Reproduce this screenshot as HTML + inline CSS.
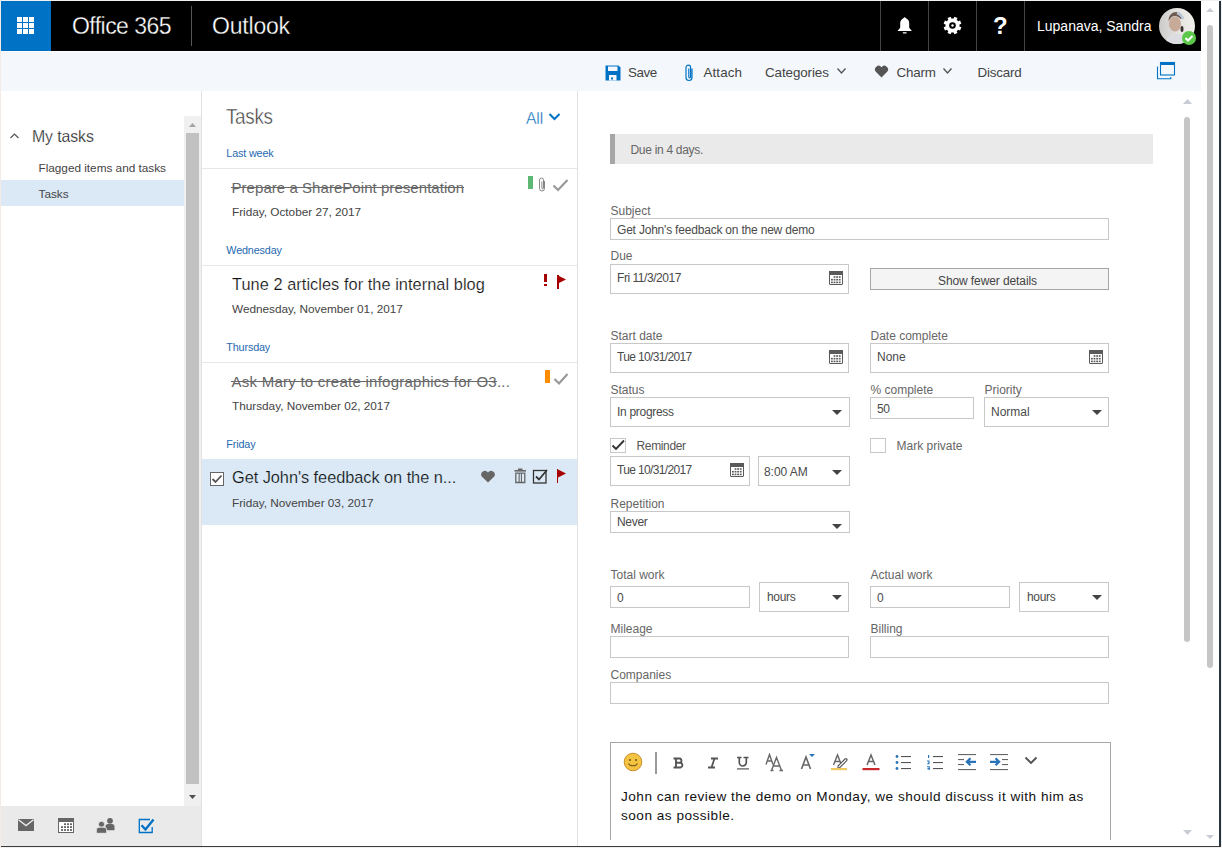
<!DOCTYPE html>
<html><head><meta charset="utf-8"><style>
html,body{margin:0;padding:0;width:1222px;height:848px;overflow:hidden;background:#fff}
body{position:relative;font-family:"Liberation Sans",sans-serif}
.t{position:absolute;white-space:nowrap;font-family:"Liberation Sans",sans-serif}
s{text-decoration:line-through}
</style></head><body>
<div style="position:absolute;left:0px;top:0px;width:1222px;height:848px;background:#fff;"></div>
<div style="position:absolute;left:1px;top:1px;width:1200px;height:50px;background:#000;"></div>
<div style="position:absolute;left:1px;top:1px;width:50px;height:50px;background:#0072c6;"></div>
<div style="position:absolute;left:17px;top:17px;width:5px;height:5px;background:#fff;"></div>
<div style="position:absolute;left:17px;top:23px;width:5px;height:5px;background:#fff;"></div>
<div style="position:absolute;left:17px;top:29px;width:5px;height:5px;background:#fff;"></div>
<div style="position:absolute;left:23px;top:17px;width:5px;height:5px;background:#fff;"></div>
<div style="position:absolute;left:23px;top:23px;width:5px;height:5px;background:#fff;"></div>
<div style="position:absolute;left:23px;top:29px;width:5px;height:5px;background:#fff;"></div>
<div style="position:absolute;left:29px;top:17px;width:5px;height:5px;background:#fff;"></div>
<div style="position:absolute;left:29px;top:23px;width:5px;height:5px;background:#fff;"></div>
<div style="position:absolute;left:29px;top:29px;width:5px;height:5px;background:#fff;"></div>
<div class="t" style="left:72px;top:15.13px;font-size:23px;line-height:23px;color:#fff;letter-spacing:-0.55px;font-weight:400;-webkit-text-stroke:0.3px #000;">Office 365</div>
<div style="position:absolute;left:191px;top:6px;width:1px;height:40px;background:#555;"></div>
<div class="t" style="left:212px;top:15.13px;font-size:23px;line-height:23px;color:#fff;letter-spacing:-0.2px;font-weight:400;-webkit-text-stroke:0.3px #000;">Outlook</div>
<div style="position:absolute;left:880px;top:1px;width:1px;height:50px;background:#444;"></div>
<div style="position:absolute;left:928px;top:1px;width:1px;height:50px;background:#444;"></div>
<div style="position:absolute;left:976px;top:1px;width:1px;height:50px;background:#444;"></div>
<div style="position:absolute;left:1024px;top:1px;width:1px;height:50px;background:#444;"></div>
<svg style="position:absolute;left:896px;top:16px;" width="18" height="20" viewBox="0 0 18 20"><path d="M8.6 1.2C7.8 1.2 7.4 2.3 6.3 3 4.9 3.9 4.2 5.3 4.2 7.5v4.3L1.5 15h14.4l-2.7-3.2V7.5c0-2.2-.7-3.6-2.1-4.5C10 2.3 9.5 1.2 8.6 1.2z" fill="#fff"/><path d="M6.6 16.2h4.2l-.6 1.3h-3z" fill="#fff"/></svg>
<svg style="position:absolute;left:943px;top:16px;" width="19" height="19" viewBox="0 0 19 19"><g transform="translate(9.5 9.5)" fill="#fff"><rect x="-1.7" y="-8.9" width="3.4" height="4" transform="rotate(22.5)"/><rect x="-1.7" y="-8.9" width="3.4" height="4" transform="rotate(67.5)"/><rect x="-1.7" y="-8.9" width="3.4" height="4" transform="rotate(112.5)"/><rect x="-1.7" y="-8.9" width="3.4" height="4" transform="rotate(157.5)"/><rect x="-1.7" y="-8.9" width="3.4" height="4" transform="rotate(202.5)"/><rect x="-1.7" y="-8.9" width="3.4" height="4" transform="rotate(247.5)"/><rect x="-1.7" y="-8.9" width="3.4" height="4" transform="rotate(292.5)"/><rect x="-1.7" y="-8.9" width="3.4" height="4" transform="rotate(337.5)"/><circle r="7"/></g><circle cx="9.5" cy="9.5" r="3.3" fill="#000"/><circle cx="9.5" cy="9.5" r="1.2" fill="#fff"/></svg>
<div class="t" style="left:993px;top:14.28px;font-size:24px;line-height:24px;color:#fff;letter-spacing:0px;font-weight:700;">?</div>
<div class="t" style="left:1037px;top:18.95px;font-size:14px;line-height:14px;color:#fff;letter-spacing:0px;font-weight:400;">Lupanava, Sandra</div>
<svg style="position:absolute;left:1158px;top:7px;" width="40" height="40" viewBox="0 0 40 40"><defs><clipPath id="ac"><circle cx="19" cy="19" r="18"/></clipPath><linearGradient id="ag" x1="0" y1="0" x2="1" y2="0"><stop offset="0" stop-color="#c9c9c9"/><stop offset="0.5" stop-color="#e6e3df"/><stop offset="1" stop-color="#f2f2ee"/></linearGradient></defs><g clip-path="url(#ac)"><rect width="40" height="40" fill="url(#ag)"/><path d="M6 40c1-9 6-13 13-13s12 4 13 13z" fill="#dcdde2"/><ellipse cx="17" cy="17" rx="6" ry="7.5" fill="#c7aa98"/><path d="M10.5 14c0-6 4-9 7.5-9s6.5 3 6.5 6l-2 1c-2-3-6-4-9-2z" fill="#6e5a4e"/><path d="M19 6c3 1 5 3 6 6" stroke="#b8c4d8" stroke-width="2.5" fill="none"/><ellipse cx="24" cy="22" rx="1.5" ry="3" fill="#3a3030"/></g><circle cx="31" cy="31" r="7" fill="#5cc84a"/><path d="M27.5 31l2.5 2.5 4.5-4.5" stroke="#fff" stroke-width="2" fill="none"/></svg>
<div style="position:absolute;left:1px;top:51px;width:1200px;height:1px;background:#fff;"></div>
<div style="position:absolute;left:1px;top:52px;width:1200px;height:39px;background:#f4f8fc;"></div>
<svg style="position:absolute;left:605px;top:65px;" width="16" height="16" viewBox="0 0 16 16"><path d="M0.5 0.5h13l2 2v13h-15z" fill="#0072c6"/><rect x="3" y="1.5" width="9.5" height="4.5" fill="#f4f8fc"/><rect x="4" y="10" width="7.5" height="5.5" fill="#f4f8fc"/><rect x="6" y="12.5" width="2" height="2" fill="#0072c6"/></svg>
<div class="t" style="left:628px;top:65.66px;font-size:13.4px;line-height:13.4px;color:#444;letter-spacing:-0.4px;font-weight:400;">Save</div>
<svg style="position:absolute;left:683px;top:63px;" width="12" height="19" viewBox="0 0 12 19"><path d="M8.5 5v9a3 3 0 0 1-6 0V4a2.3 2.3 0 0 1 4.6 0v9.5a.9.9 0 0 1-1.8 0V5" stroke="#0072c6" stroke-width="1.2" fill="none" transform="translate(0.5 0.5)"/></svg>
<div class="t" style="left:703.5px;top:65.66px;font-size:13.4px;line-height:13.4px;color:#444;letter-spacing:0.1px;font-weight:400;">Attach</div>
<div class="t" style="left:765px;top:65.66px;font-size:13.4px;line-height:13.4px;color:#444;letter-spacing:-0.1px;font-weight:400;">Categories</div>
<svg style="position:absolute;left:836px;top:67px;" width="11" height="9" viewBox="0 0 11 9"><path d="M1.5 1.5l4 4.5 4-4.5" stroke="#555" stroke-width="1.4" fill="none"/></svg>
<svg style="position:absolute;left:874px;top:65px;" width="15" height="13" viewBox="0 0 15 13"><path d="M7.5 12.5L1.8 6.8A3.4 3.4 0 0 1 7.5 2.2a3.4 3.4 0 0 1 5.7 4.6z" fill="#555"/></svg>
<div class="t" style="left:896.5px;top:65.66px;font-size:13.4px;line-height:13.4px;color:#444;letter-spacing:-0.2px;font-weight:400;">Charm</div>
<svg style="position:absolute;left:942px;top:67px;" width="11" height="9" viewBox="0 0 11 9"><path d="M1.5 1.5l4 4.5 4-4.5" stroke="#555" stroke-width="1.4" fill="none"/></svg>
<div class="t" style="left:977.5px;top:65.66px;font-size:13.4px;line-height:13.4px;color:#444;letter-spacing:-0.2px;font-weight:400;">Discard</div>
<svg style="position:absolute;left:1155px;top:61px;" width="22" height="20" viewBox="0 0 22 20"><rect x="5.5" y="1.5" width="14" height="12.5" fill="none" stroke="#0072c6" stroke-width="1.1"/><rect x="5" y="1" width="15" height="3" fill="#0072c6"/><path d="M2.5 5.5v12.3h13.3v-1.8" fill="none" stroke="#0072c6" stroke-width="1.1"/></svg>
<div style="position:absolute;left:1px;top:91px;width:200px;height:715px;background:#fff;"></div>
<svg style="position:absolute;left:9px;top:131px;" width="11" height="9" viewBox="0 0 11 9"><path d="M1.5 7l4-4 4 4" stroke="#555" stroke-width="1.2" fill="none"/></svg>
<div class="t" style="left:31.5px;top:127.83px;font-size:16.5px;line-height:16.5px;color:#1a1a1a;letter-spacing:-0.1px;font-weight:400;transform:scaleX(0.96);transform-origin:0 0;-webkit-text-stroke:0.25px #fff;">My tasks</div>
<div class="t" style="left:38.5px;top:162.61px;font-size:11.8px;line-height:11.8px;color:#444;letter-spacing:-0.02px;font-weight:400;">Flagged items and tasks</div>
<div style="position:absolute;left:1px;top:180px;width:183px;height:26px;background:#dbe9f7;"></div>
<div class="t" style="left:38.5px;top:188.61px;font-size:11.8px;line-height:11.8px;color:#444;letter-spacing:0px;font-weight:400;">Tasks</div>
<div style="position:absolute;left:184px;top:116px;width:17px;height:690px;background:#f0f0f0;"></div>
<div style="position:absolute;left:186px;top:133px;width:13px;height:651px;background:#c1c1c1;"></div>
<svg style="position:absolute;left:188px;top:122px;" width="9" height="6" viewBox="0 0 9 6"><path d="M1 5h7L4.5 1z" fill="#a3a3a3"/></svg>
<svg style="position:absolute;left:188px;top:794px;" width="9" height="6" viewBox="0 0 9 6"><path d="M1 1h7L4.5 5z" fill="#505050"/></svg>
<div style="position:absolute;left:201px;top:91px;width:1px;height:755px;background:#e1e1e1;"></div>
<div style="position:absolute;left:1px;top:806px;width:200px;height:40px;background:#eaeaea;"></div>
<svg style="position:absolute;left:18px;top:819px;" width="16" height="12" viewBox="0 0 16 12"><rect x="0" y="0" width="16" height="12" fill="#666"/><path d="M0.5 0.8L8 6.5l7.5-5.7" stroke="#eaeaea" stroke-width="1.4" fill="none"/></svg>
<svg style="position:absolute;left:58px;top:818px;" width="16" height="15" viewBox="0 0 16 15"><rect x="0.5" y="0.5" width="15" height="14" fill="#fff" stroke="#666"/><rect x="0" y="0" width="16" height="4" fill="#666"/><rect x="6" y="5.3" width="2" height="1.8" fill="#666"/><rect x="9" y="5.3" width="2" height="1.8" fill="#666"/><rect x="12" y="5.3" width="2" height="1.8" fill="#666"/><rect x="3" y="8.2" width="2" height="1.8" fill="#666"/><rect x="6" y="8.2" width="2" height="1.8" fill="#666"/><rect x="9" y="8.2" width="2" height="1.8" fill="#666"/><rect x="12" y="8.2" width="2" height="1.8" fill="#666"/><rect x="3" y="11.1" width="2" height="1.8" fill="#666"/><rect x="6" y="11.1" width="2" height="1.8" fill="#666"/><rect x="9" y="11.1" width="2" height="1.8" fill="#666"/><rect x="12" y="11.1" width="2" height="1.8" fill="#666"/></svg>
<svg style="position:absolute;left:96px;top:817px;" width="21" height="17" viewBox="0 0 21 17"><circle cx="14" cy="3.8" r="2.9" fill="#666"/><path d="M9.5 13.2V9.6A2.6 2.6 0 0 1 12.1 7h3.8a2.6 2.6 0 0 1 2.6 2.6v3.6z" fill="#666"/><circle cx="5.5" cy="7.3" r="3.1" fill="#666" stroke="#eaeaea" stroke-width="0.9"/><path d="M0.3 16.3v-3.4A2.7 2.7 0 0 1 3 10.2h5a2.7 2.7 0 0 1 2.7 2.7v3.4z" fill="#666" stroke="#eaeaea" stroke-width="0.9"/></svg>
<svg style="position:absolute;left:137px;top:817px;" width="18" height="17" viewBox="0 0 18 17"><path d="M13 2.5H2.3v13h12.9V10" fill="none" stroke="#0072c6" stroke-width="1.3"/><path d="M4.5 8.2l4 4.3 8-10" stroke="#0072c6" stroke-width="2.4" fill="none"/></svg>
<div style="position:absolute;left:202px;top:91px;width:375px;height:755px;background:#fff;"></div>
<div class="t" style="left:226px;top:105.68px;font-size:22px;line-height:22px;color:#3a3a3a;letter-spacing:-0.4px;font-weight:400;transform:scaleX(0.86);transform-origin:0 0;-webkit-text-stroke:0.45px #fff;">Tasks</div>
<div class="t" style="left:525.5px;top:109.83px;font-size:16.5px;line-height:16.5px;color:#0068b8;letter-spacing:-0.1px;font-weight:400;transform:scaleX(0.95);transform-origin:0 0;-webkit-text-stroke:0.35px #fff;">All</div>
<svg style="position:absolute;left:548px;top:112px;" width="13" height="10" viewBox="0 0 13 10"><path d="M1.5 2l5 5 5-5" stroke="#0072c6" stroke-width="2" fill="none"/></svg>
<div style="position:absolute;left:577px;top:91px;width:1px;height:755px;background:#e1e1e1;"></div>
<div class="t" style="left:226.3px;top:147.66px;font-size:10.8px;line-height:10.8px;color:#2669b0;letter-spacing:-0.15px;font-weight:400;">Last week</div>
<div class="t" style="left:226.3px;top:244.66px;font-size:10.8px;line-height:10.8px;color:#2669b0;letter-spacing:-0.15px;font-weight:400;">Wednesday</div>
<div class="t" style="left:226.3px;top:341.66px;font-size:10.8px;line-height:10.8px;color:#2669b0;letter-spacing:-0.15px;font-weight:400;">Thursday</div>
<div class="t" style="left:226.3px;top:438.66px;font-size:10.8px;line-height:10.8px;color:#2669b0;letter-spacing:-0.15px;font-weight:400;">Friday</div>
<div style="position:absolute;left:202px;top:168px;width:375px;height:1px;background:#e6e6e6;"></div>
<div style="position:absolute;left:202px;top:265px;width:375px;height:1px;background:#e6e6e6;"></div>
<div style="position:absolute;left:202px;top:362px;width:375px;height:1px;background:#e6e6e6;"></div>
<div style="position:absolute;left:202px;top:459px;width:375px;height:1px;background:#e6e6e6;"></div>
<div style="position:absolute;left:202px;top:459px;width:375px;height:66px;background:#dbe9f7;"></div>
<div class="t" style="left:231.5px;top:180.10px;font-size:15px;line-height:15px;color:#666;letter-spacing:0.05px;font-weight:400;">Prepare a SharePoint presentation</div>
<div style="position:absolute;left:231px;top:187px;width:233px;height:1px;background:#6a6a6a;"></div>
<div class="t" style="left:232px;top:207.31px;font-size:11.8px;line-height:11.8px;color:#444;letter-spacing:-0.02px;font-weight:400;">Friday, October 27, 2017</div>
<div style="position:absolute;left:528px;top:176px;width:5px;height:13px;background:#5cb874;"></div>
<svg style="position:absolute;left:538px;top:177px;" width="9" height="16" viewBox="0 0 9 16"><path d="M6.5 4v7.5a2.5 2.5 0 0 1-5 0V3a2 2 0 0 1 4 0v8a0.8 0.8 0 0 1-1.6 0V4.5" stroke="#888" stroke-width="1" fill="none"/></svg>
<svg style="position:absolute;left:552px;top:178px;" width="17" height="14" viewBox="0 0 17 14"><path d="M1.5 7.5l4.5 4.5 9.5-10" stroke="#999" stroke-width="2.2" fill="none"/></svg>
<div class="t" style="left:231.5px;top:276.55px;font-size:16.6px;line-height:16.6px;color:#111;letter-spacing:0.05px;font-weight:400;transform:scaleX(0.985);transform-origin:0 0;-webkit-text-stroke:0.2px #fff;">Tune 2 articles for the internal blog</div>
<div class="t" style="left:232px;top:304.41px;font-size:11.8px;line-height:11.8px;color:#444;letter-spacing:-0.02px;font-weight:400;">Wednesday, November 01, 2017</div>
<div style="position:absolute;left:544px;top:274px;width:2.5px;height:8px;background:#a80000;"></div>
<div style="position:absolute;left:544px;top:283.5px;width:2.5px;height:2.5px;background:#a80000;"></div>
<div style="position:absolute;left:557px;top:275px;width:2px;height:14px;background:#a80000;"></div>
<svg style="position:absolute;left:559px;top:275px;" width="8" height="9" viewBox="0 0 8 9"><path d="M0 1l7 3.5L0 8z" fill="#a80000"/></svg>
<div class="t" style="left:231.5px;top:374.20px;font-size:15px;line-height:15px;color:#666;letter-spacing:0.25px;font-weight:400;">Ask Mary to create infographics for O3<span style="letter-spacing:0.2px">...</span></div>
<div style="position:absolute;left:231px;top:381px;width:266px;height:1px;background:#6a6a6a;"></div>
<div class="t" style="left:232px;top:401.41px;font-size:11.8px;line-height:11.8px;color:#444;letter-spacing:-0.02px;font-weight:400;">Thursday, November 02, 2017</div>
<div style="position:absolute;left:545px;top:370px;width:5px;height:13px;background:#ff8c00;"></div>
<svg style="position:absolute;left:553px;top:372px;" width="16" height="14" viewBox="0 0 16 14"><path d="M1.5 7l4.5 4.5 8.5-9.5" stroke="#999" stroke-width="2.2" fill="none"/></svg>
<svg style="position:absolute;left:210px;top:472px;" width="14" height="14" viewBox="0 0 14 14"><rect x="0.5" y="0.5" width="13" height="13" fill="#fff" stroke="#666"/><path d="M2.5 7l3 3 6-6.5" stroke="#555" stroke-width="1.8" fill="none"/></svg>
<div class="t" style="left:231.5px;top:470.25px;font-size:16.6px;line-height:16.6px;color:#111;letter-spacing:-0.05px;font-weight:400;transform:scaleX(0.985);transform-origin:0 0;-webkit-text-stroke:0.2px #dbe9f7;">Get John's feedback on the n...</div>
<div class="t" style="left:232px;top:498.21px;font-size:11.8px;line-height:11.8px;color:#444;letter-spacing:-0.02px;font-weight:400;">Friday, November 03, 2017</div>
<svg style="position:absolute;left:480px;top:470px;" width="16" height="13" viewBox="0 0 16 13"><path d="M8 12.5L2 6.8A3.5 3.5 0 0 1 8 2.4a3.5 3.5 0 0 1 6 4.4z" fill="#666"/></svg>
<svg style="position:absolute;left:514px;top:468px;" width="13" height="16" viewBox="0 0 13 16"><rect x="0.5" y="2" width="11.5" height="1.6" fill="#666"/><rect x="4" y="0.5" width="4.5" height="1.6" fill="#666"/><path d="M1.8 5.2h9v9.3h-9z" fill="none" stroke="#666" stroke-width="1.3"/><rect x="4.6" y="5" width="1.1" height="9.5" fill="#666"/><rect x="6.9" y="5" width="1.1" height="9.5" fill="#666"/></svg>
<svg style="position:absolute;left:532px;top:469px;" width="16" height="15" viewBox="0 0 16 15"><rect x="1.5" y="1.5" width="12.5" height="12.5" fill="none" stroke="#333" stroke-width="1.3"/><path d="M4 7.5l3 3 8-9.5" stroke="#333" stroke-width="1.8" fill="none"/></svg>
<div style="position:absolute;left:556.5px;top:469px;width:1.5px;height:14px;background:#a80000;"></div>
<svg style="position:absolute;left:558px;top:469px;" width="9" height="9" viewBox="0 0 9 9"><path d="M0 0.5l8 4L0 8.5z" fill="#a80000"/></svg>
<div style="position:absolute;left:578px;top:91px;width:623px;height:749px;background:#fff;"></div>
<div style="position:absolute;left:610px;top:134px;width:543px;height:30px;background:#eaeaea;"></div>
<div style="position:absolute;left:610px;top:134px;width:5px;height:30px;background:#a6a6a6;"></div>
<div class="t" style="left:630.5px;top:143.84px;font-size:12px;line-height:12px;color:#666;letter-spacing:-0.3px;font-weight:400;">Due in 4 days.</div>
<div class="t" style="left:610.5px;top:204.64px;font-size:12px;line-height:12px;color:#666;letter-spacing:0px;font-weight:400;">Subject</div>
<div style="position:absolute;left:610px;top:218px;width:497px;height:20px;border:1px solid #c8c8c8;background:#fff;"></div>
<div class="t" style="left:617px;top:224.14px;font-size:12px;line-height:12px;color:#4a4a4a;letter-spacing:-0.2px;font-weight:400;">Get John's feedback on the new demo</div>
<div class="t" style="left:610.5px;top:250.24px;font-size:12px;line-height:12px;color:#666;letter-spacing:0px;font-weight:400;">Due</div>
<div style="position:absolute;left:610px;top:264px;width:237px;height:28px;border:1px solid #c8c8c8;background:#fff;"></div>
<div class="t" style="left:617px;top:271.54px;font-size:12px;line-height:12px;color:#4a4a4a;letter-spacing:-0.45px;font-weight:400;">Fri 11/3/2017</div>
<svg style="position:absolute;left:829px;top:271px;" width="14" height="14" viewBox="0 0 14 14"><rect x="0.5" y="0.5" width="13" height="13" rx="0.5" fill="#fff" stroke="#5a5a5a"/><rect x="0" y="0" width="14" height="4" fill="#5a5a5a"/><rect x="4.6" y="5.2" width="1.8" height="1.6" fill="#5a5a5a"/><rect x="7.2" y="5.2" width="1.8" height="1.6" fill="#5a5a5a"/><rect x="9.8" y="5.2" width="1.8" height="1.6" fill="#5a5a5a"/><rect x="2.0" y="7.9" width="1.8" height="1.6" fill="#5a5a5a"/><rect x="4.6" y="7.9" width="1.8" height="1.6" fill="#5a5a5a"/><rect x="7.2" y="7.9" width="1.8" height="1.6" fill="#5a5a5a"/><rect x="9.8" y="7.9" width="1.8" height="1.6" fill="#5a5a5a"/><rect x="2.0" y="10.6" width="1.8" height="1.6" fill="#5a5a5a"/><rect x="4.6" y="10.6" width="1.8" height="1.6" fill="#5a5a5a"/><rect x="7.2" y="10.6" width="1.8" height="1.6" fill="#5a5a5a"/><rect x="9.8" y="10.6" width="1.8" height="1.6" fill="#5a5a5a"/></svg>
<div style="position:absolute;left:870px;top:268px;width:237px;height:20px;border:1px solid #a6a6a6;background:#f4f4f4;"></div>
<div class="t" style="left:938px;top:274.74px;font-size:12px;line-height:12px;color:#444;letter-spacing:-0.1px;font-weight:400;">Show fewer details</div>
<div class="t" style="left:610.5px;top:329.74px;font-size:12px;line-height:12px;color:#666;letter-spacing:0px;font-weight:400;">Start date</div>
<div style="position:absolute;left:610px;top:343px;width:237px;height:28px;border:1px solid #c8c8c8;background:#fff;"></div>
<div class="t" style="left:617px;top:351.04px;font-size:12px;line-height:12px;color:#4a4a4a;letter-spacing:-0.65px;font-weight:400;">Tue 10/31/2017</div>
<svg style="position:absolute;left:829px;top:350px;" width="14" height="14" viewBox="0 0 14 14"><rect x="0.5" y="0.5" width="13" height="13" rx="0.5" fill="#fff" stroke="#5a5a5a"/><rect x="0" y="0" width="14" height="4" fill="#5a5a5a"/><rect x="4.6" y="5.2" width="1.8" height="1.6" fill="#5a5a5a"/><rect x="7.2" y="5.2" width="1.8" height="1.6" fill="#5a5a5a"/><rect x="9.8" y="5.2" width="1.8" height="1.6" fill="#5a5a5a"/><rect x="2.0" y="7.9" width="1.8" height="1.6" fill="#5a5a5a"/><rect x="4.6" y="7.9" width="1.8" height="1.6" fill="#5a5a5a"/><rect x="7.2" y="7.9" width="1.8" height="1.6" fill="#5a5a5a"/><rect x="9.8" y="7.9" width="1.8" height="1.6" fill="#5a5a5a"/><rect x="2.0" y="10.6" width="1.8" height="1.6" fill="#5a5a5a"/><rect x="4.6" y="10.6" width="1.8" height="1.6" fill="#5a5a5a"/><rect x="7.2" y="10.6" width="1.8" height="1.6" fill="#5a5a5a"/><rect x="9.8" y="10.6" width="1.8" height="1.6" fill="#5a5a5a"/></svg>
<div class="t" style="left:870.5px;top:329.74px;font-size:12px;line-height:12px;color:#666;letter-spacing:0px;font-weight:400;">Date complete</div>
<div style="position:absolute;left:870px;top:343px;width:237px;height:28px;border:1px solid #c8c8c8;background:#fff;"></div>
<div class="t" style="left:877px;top:351.04px;font-size:12px;line-height:12px;color:#4a4a4a;letter-spacing:0px;font-weight:400;">None</div>
<svg style="position:absolute;left:1089px;top:350px;" width="14" height="14" viewBox="0 0 14 14"><rect x="0.5" y="0.5" width="13" height="13" rx="0.5" fill="#fff" stroke="#5a5a5a"/><rect x="0" y="0" width="14" height="4" fill="#5a5a5a"/><rect x="4.6" y="5.2" width="1.8" height="1.6" fill="#5a5a5a"/><rect x="7.2" y="5.2" width="1.8" height="1.6" fill="#5a5a5a"/><rect x="9.8" y="5.2" width="1.8" height="1.6" fill="#5a5a5a"/><rect x="2.0" y="7.9" width="1.8" height="1.6" fill="#5a5a5a"/><rect x="4.6" y="7.9" width="1.8" height="1.6" fill="#5a5a5a"/><rect x="7.2" y="7.9" width="1.8" height="1.6" fill="#5a5a5a"/><rect x="9.8" y="7.9" width="1.8" height="1.6" fill="#5a5a5a"/><rect x="2.0" y="10.6" width="1.8" height="1.6" fill="#5a5a5a"/><rect x="4.6" y="10.6" width="1.8" height="1.6" fill="#5a5a5a"/><rect x="7.2" y="10.6" width="1.8" height="1.6" fill="#5a5a5a"/><rect x="9.8" y="10.6" width="1.8" height="1.6" fill="#5a5a5a"/></svg>
<div class="t" style="left:610.5px;top:383.54px;font-size:12px;line-height:12px;color:#666;letter-spacing:0px;font-weight:400;">Status</div>
<div style="position:absolute;left:610px;top:397px;width:238px;height:28px;border:1px solid #c8c8c8;background:#fff;"></div>
<div class="t" style="left:617px;top:406.04px;font-size:12px;line-height:12px;color:#4a4a4a;letter-spacing:-0.3px;font-weight:400;">In progress</div>
<svg style="position:absolute;left:832px;top:410px;" width="10" height="5" viewBox="0 0 10 5"><path d="M0 0h10L5 5z" fill="#444"/></svg>
<div class="t" style="left:870.5px;top:383.84px;font-size:12px;line-height:12px;color:#666;letter-spacing:0px;font-weight:400;">% complete</div>
<div style="position:absolute;left:870px;top:397px;width:102px;height:20px;border:1px solid #c8c8c8;background:#fff;"></div>
<div class="t" style="left:877px;top:402.54px;font-size:12px;line-height:12px;color:#4a4a4a;letter-spacing:-0.3px;font-weight:400;">50</div>
<div class="t" style="left:984.5px;top:383.84px;font-size:12px;line-height:12px;color:#666;letter-spacing:0px;font-weight:400;">Priority</div>
<div style="position:absolute;left:984px;top:397px;width:123px;height:28px;border:1px solid #c8c8c8;background:#fff;"></div>
<div class="t" style="left:991px;top:405.84px;font-size:12px;line-height:12px;color:#4a4a4a;letter-spacing:0px;font-weight:400;">Normal</div>
<svg style="position:absolute;left:1092px;top:410px;" width="10" height="5" viewBox="0 0 10 5"><path d="M0 0h10L5 5z" fill="#444"/></svg>
<svg style="position:absolute;left:610px;top:438px;" width="16" height="15" viewBox="0 0 16 15"><rect x="0.5" y="0.5" width="15" height="14" fill="#fff" stroke="#c8c8c8"/><path d="M2.5 7.5l3.5 3.5 8-8.5" stroke="#333" stroke-width="1.9" fill="none"/></svg>
<div class="t" style="left:636.5px;top:439.74px;font-size:12px;line-height:12px;color:#555;letter-spacing:-0.35px;font-weight:400;">Reminder</div>
<svg style="position:absolute;left:870px;top:438px;" width="16" height="15" viewBox="0 0 16 15"><rect x="0.5" y="0.5" width="15" height="14" fill="#fff" stroke="#c8c8c8"/></svg>
<div class="t" style="left:896.5px;top:439.64px;font-size:12px;line-height:12px;color:#666;letter-spacing:0px;font-weight:400;">Mark private</div>
<div style="position:absolute;left:610px;top:456px;width:138px;height:28px;border:1px solid #c8c8c8;background:#fff;"></div>
<div class="t" style="left:617px;top:463.54px;font-size:12px;line-height:12px;color:#4a4a4a;letter-spacing:-0.65px;font-weight:400;">Tue 10/31/2017</div>
<svg style="position:absolute;left:730px;top:463px;" width="14" height="14" viewBox="0 0 14 14"><rect x="0.5" y="0.5" width="13" height="13" rx="0.5" fill="#fff" stroke="#5a5a5a"/><rect x="0" y="0" width="14" height="4" fill="#5a5a5a"/><rect x="4.6" y="5.2" width="1.8" height="1.6" fill="#5a5a5a"/><rect x="7.2" y="5.2" width="1.8" height="1.6" fill="#5a5a5a"/><rect x="9.8" y="5.2" width="1.8" height="1.6" fill="#5a5a5a"/><rect x="2.0" y="7.9" width="1.8" height="1.6" fill="#5a5a5a"/><rect x="4.6" y="7.9" width="1.8" height="1.6" fill="#5a5a5a"/><rect x="7.2" y="7.9" width="1.8" height="1.6" fill="#5a5a5a"/><rect x="9.8" y="7.9" width="1.8" height="1.6" fill="#5a5a5a"/><rect x="2.0" y="10.6" width="1.8" height="1.6" fill="#5a5a5a"/><rect x="4.6" y="10.6" width="1.8" height="1.6" fill="#5a5a5a"/><rect x="7.2" y="10.6" width="1.8" height="1.6" fill="#5a5a5a"/><rect x="9.8" y="10.6" width="1.8" height="1.6" fill="#5a5a5a"/></svg>
<div style="position:absolute;left:758px;top:456px;width:90px;height:28px;border:1px solid #c8c8c8;background:#fff;"></div>
<div class="t" style="left:764px;top:465.84px;font-size:12px;line-height:12px;color:#4a4a4a;letter-spacing:-0.05px;font-weight:400;">8:00 AM</div>
<svg style="position:absolute;left:832px;top:470px;" width="10" height="5" viewBox="0 0 10 5"><path d="M0 0h10L5 5z" fill="#444"/></svg>
<div class="t" style="left:610.5px;top:497.64px;font-size:12px;line-height:12px;color:#666;letter-spacing:0px;font-weight:400;">Repetition</div>
<div style="position:absolute;left:610px;top:511px;width:238px;height:20px;border:1px solid #c8c8c8;background:#fff;"></div>
<div class="t" style="left:617px;top:516.04px;font-size:12px;line-height:12px;color:#4a4a4a;letter-spacing:-0.3px;font-weight:400;">Never</div>
<svg style="position:absolute;left:832px;top:524px;" width="10" height="5" viewBox="0 0 10 5"><path d="M0 0h10L5 5z" fill="#444"/></svg>
<div class="t" style="left:610.5px;top:568.64px;font-size:12px;line-height:12px;color:#666;letter-spacing:0px;font-weight:400;">Total work</div>
<div style="position:absolute;left:610px;top:586px;width:138px;height:20px;border:1px solid #c8c8c8;background:#fff;"></div>
<div class="t" style="left:617px;top:592.14px;font-size:12px;line-height:12px;color:#4a4a4a;letter-spacing:-0.3px;font-weight:400;">0</div>
<div style="position:absolute;left:759px;top:582px;width:88px;height:28px;border:1px solid #c8c8c8;background:#fff;"></div>
<div class="t" style="left:767px;top:590.54px;font-size:12px;line-height:12px;color:#4a4a4a;letter-spacing:-0.3px;font-weight:400;">hours</div>
<svg style="position:absolute;left:832px;top:595px;" width="10" height="5" viewBox="0 0 10 5"><path d="M0 0h10L5 5z" fill="#444"/></svg>
<div class="t" style="left:870.5px;top:568.64px;font-size:12px;line-height:12px;color:#666;letter-spacing:0px;font-weight:400;">Actual work</div>
<div style="position:absolute;left:870px;top:586px;width:138px;height:20px;border:1px solid #c8c8c8;background:#fff;"></div>
<div class="t" style="left:877px;top:592.14px;font-size:12px;line-height:12px;color:#4a4a4a;letter-spacing:-0.3px;font-weight:400;">0</div>
<div style="position:absolute;left:1019px;top:582px;width:88px;height:28px;border:1px solid #c8c8c8;background:#fff;"></div>
<div class="t" style="left:1027px;top:590.54px;font-size:12px;line-height:12px;color:#4a4a4a;letter-spacing:-0.3px;font-weight:400;">hours</div>
<svg style="position:absolute;left:1092px;top:595px;" width="10" height="5" viewBox="0 0 10 5"><path d="M0 0h10L5 5z" fill="#444"/></svg>
<div class="t" style="left:610.5px;top:622.54px;font-size:12px;line-height:12px;color:#666;letter-spacing:0px;font-weight:400;">Mileage</div>
<div style="position:absolute;left:610px;top:636px;width:237px;height:20px;border:1px solid #c8c8c8;background:#fff;"></div>
<div class="t" style="left:870.5px;top:622.54px;font-size:12px;line-height:12px;color:#666;letter-spacing:0px;font-weight:400;">Billing</div>
<div style="position:absolute;left:870px;top:636px;width:237px;height:20px;border:1px solid #c8c8c8;background:#fff;"></div>
<div class="t" style="left:610.5px;top:668.54px;font-size:12px;line-height:12px;color:#666;letter-spacing:0px;font-weight:400;">Companies</div>
<div style="position:absolute;left:610px;top:682px;width:497px;height:20px;border:1px solid #c8c8c8;background:#fff;"></div>
<div style="position:absolute;left:610px;top:742px;width:499px;height:120px;border:1px solid #a6a6a6;border-bottom:none"></div>
<div style="position:absolute;left:578px;top:840px;width:623px;height:6px;background:#fff;"></div>
<svg style="position:absolute;left:623px;top:752px;" width="20" height="20" viewBox="0 0 20 20"><circle cx="10" cy="10" r="8.8" fill="#f5c342" stroke="#c9912a" stroke-width="1"/><circle cx="7" cy="8" r="1.1" fill="#7a5a1a"/><circle cx="13" cy="8" r="1.1" fill="#7a5a1a"/><path d="M5.5 11.5c1.5 3 7.5 3 9 0" stroke="#7a5a1a" stroke-width="1.1" fill="none"/></svg>
<div style="position:absolute;left:655px;top:752px;width:1.5px;height:22px;background:#999;"></div>
<svg style="position:absolute;left:673px;top:756.5px;" width="12" height="12" viewBox="0 0 12 12"><path d="M0.5 1.5h6.5a2.3 2.3 0 0 1 0 4.3H3M3 5.8h4.5a2.4 2.4 0 0 1 0 4.7H0.5M3 1.5v9" stroke="#555" stroke-width="1.9" fill="none"/></svg>
<svg style="position:absolute;left:707px;top:756.5px;" width="12" height="12" viewBox="0 0 12 12"><path d="M4 1.5h7M1 10.5h7M7.5 1.5L4.5 10.5" stroke="#555" stroke-width="1.8" fill="none"/></svg>
<svg style="position:absolute;left:737px;top:756px;" width="12" height="16" viewBox="0 0 12 16"><path d="M0 1.5h4.5M6.5 1.5h5M2.3 1.5v5a3.5 3.5 0 0 0 7 0v-5" stroke="#555" stroke-width="1.7" fill="none"/><rect x="0" y="12.3" width="12" height="1.2" fill="#555"/></svg>
<svg style="position:absolute;left:765px;top:753px;" width="22" height="19" viewBox="0 0 22 19"><path d="M1 11.5L4.5 1.5L8 11.5M2.3 8h4.4" stroke="#666" stroke-width="1.4" fill="none"/><path d="M6.5 17.5L11.5 4.5L16.5 17.5M8.3 13h6.4M5.5 17.5h3M14.5 17.5h3.5" stroke="#666" stroke-width="1.4" fill="none"/></svg>
<svg style="position:absolute;left:800px;top:753px;" width="16" height="17" viewBox="0 0 16 17"><path d="M1.5 16L6 4L10.5 16M3 12h6" stroke="#666" stroke-width="1.6" fill="none"/><path d="M9 1h6L12 4z" fill="#2b73b8"/></svg>
<svg style="position:absolute;left:830px;top:753px;" width="18" height="18" viewBox="0 0 18 18"><path d="M3.5 12L7.5 2L11.5 12M5 8.5h5" stroke="#666" stroke-width="1.4" fill="none"/><path d="M8 13l7-7a1.2 1.2 0 0 1 1.7 1.7l-7 7h-1.7z" fill="#fff" stroke="#555" stroke-width="1.1"/><rect x="1" y="15" width="16" height="2.2" fill="#f0c860"/></svg>
<svg style="position:absolute;left:862px;top:753px;" width="18" height="18" viewBox="0 0 18 18"><path d="M5 12L9 2L13 12M6.5 8.5h5" stroke="#666" stroke-width="1.5" fill="none"/><rect x="0.5" y="15" width="17" height="2.2" fill="#c8282c"/></svg>
<svg style="position:absolute;left:894px;top:754px;" width="18" height="16" viewBox="0 0 18 16"><circle cx="3" cy="2.5" r="1.4" fill="#2b73b8"/><circle cx="3" cy="8.5" r="1.4" fill="#2b73b8"/><circle cx="3" cy="14.5" r="1.4" fill="#2b73b8"/><rect x="7" y="2" width="10" height="1.1" fill="#555"/><rect x="7" y="8" width="10" height="1.1" fill="#555"/><rect x="7" y="14" width="10" height="1.1" fill="#555"/></svg>
<svg style="position:absolute;left:926px;top:754px;" width="18" height="16" viewBox="0 0 18 16"><rect x="2" y="1" width="1.2" height="3" fill="#2b73b8"/><path d="M1 7h2v1.5l-1 1.2h1.5" stroke="#2b73b8" stroke-width="1.1" fill="none"/><path d="M1 12.8h2.3v3.4H1M1.5 14.5h1.8" stroke="#2b73b8" stroke-width="1.1" fill="none"/><rect x="7" y="2" width="10" height="1.1" fill="#555"/><rect x="7" y="8" width="10" height="1.1" fill="#555"/><rect x="7" y="14" width="10" height="1.1" fill="#555"/></svg>
<svg style="position:absolute;left:957px;top:753px;" width="20" height="18" viewBox="0 0 20 18"><rect x="1" y="1" width="18" height="1.1" fill="#666"/><rect x="1" y="6" width="6" height="1.1" fill="#666"/><rect x="1" y="11" width="6" height="1.1" fill="#666"/><rect x="1" y="16" width="18" height="1.1" fill="#666"/><path d="M19 8.8h-8.5M13.5 5.3l-3.6 3.5 3.6 3.5" stroke="#2b73b8" stroke-width="2.3" fill="none"/></svg>
<svg style="position:absolute;left:989px;top:753px;" width="20" height="18" viewBox="0 0 20 18"><rect x="1" y="1" width="18" height="1.1" fill="#666"/><rect x="13" y="6" width="6" height="1.1" fill="#666"/><rect x="13" y="11" width="6" height="1.1" fill="#666"/><rect x="1" y="16" width="18" height="1.1" fill="#666"/><path d="M1 8.8h8.5M6.5 5.3l3.6 3.5-3.6 3.5" stroke="#2b73b8" stroke-width="2.3" fill="none"/></svg>
<svg style="position:absolute;left:1024px;top:755px;" width="14" height="11" viewBox="0 0 14 11"><path d="M1.5 2.5l5.5 5.5 5.5-5.5" stroke="#555" stroke-width="1.9" fill="none"/></svg>
<div class="t" style="left:621px;top:789.89px;font-size:13.6px;line-height:13.6px;color:#111;letter-spacing:0.5px;font-weight:400;">John can review the demo on Monday, we should discuss it with him as</div>
<div class="t" style="left:621px;top:808.69px;font-size:13.6px;line-height:13.6px;color:#111;letter-spacing:0.5px;font-weight:400;">soon as possible.</div>
<svg style="position:absolute;left:1183px;top:99px;" width="9" height="5" viewBox="0 0 9 5"><path d="M0 5h9L4.5 0z" fill="#c8ccd4"/></svg>
<div style="position:absolute;left:1184px;top:117px;width:6px;height:525px;background:#c6c6c6;border-radius:3px;"></div>
<svg style="position:absolute;left:1183px;top:830px;" width="9" height="5" viewBox="0 0 9 5"><path d="M0 0h9L4.5 5z" fill="#c8ccd4"/></svg>
<div style="position:absolute;left:1201px;top:1px;width:18px;height:845px;background:#fff;"></div>
<svg style="position:absolute;left:1206px;top:8px;" width="8" height="4" viewBox="0 0 8 4"><path d="M0 4h8L4 0z" fill="#c8ccd4"/></svg>
<div style="position:absolute;left:1207px;top:25px;width:6px;height:643px;background:#c6c6c6;border-radius:3px;"></div>
<svg style="position:absolute;left:1206px;top:835px;" width="8" height="4" viewBox="0 0 8 4"><path d="M0 0h8L4 4z" fill="#c8ccd4"/></svg>
<div style="position:absolute;left:0px;top:0px;width:1222px;height:1px;background:#f2f0ee;"></div>
<div style="position:absolute;left:0px;top:0px;width:1px;height:848px;background:#f3ece6;"></div>
<div style="position:absolute;left:1219px;top:1px;width:2px;height:846px;background:#26333d;"></div>
<div style="position:absolute;left:1px;top:846px;width:1220px;height:1px;background:#3c3c3c;"></div>
<div style="position:absolute;left:0px;top:847px;width:1222px;height:1px;background:#f0f0f0;"></div>
<div style="position:absolute;left:1221px;top:0px;width:1px;height:848px;background:#f0f0f0;"></div>
</body></html>
